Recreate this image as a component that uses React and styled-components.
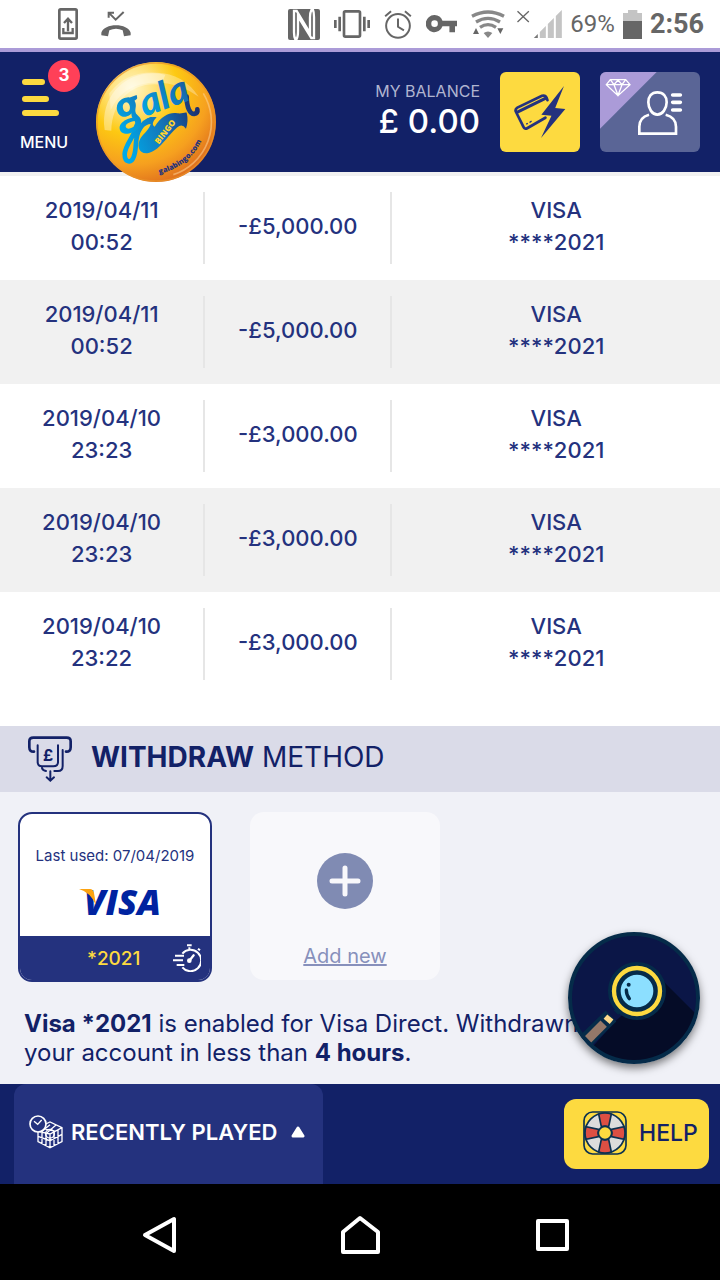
import styled, { createGlobalStyle } from "styled-components";

const withdrawals = [
    { date: "2019/04/11", time: "00:52", amount: "-£5,000.00", card: "****2021" },
    { date: "2019/04/11", time: "00:52", amount: "-£5,000.00", card: "****2021" },
    { date: "2019/04/10", time: "23:23", amount: "-£3,000.00", card: "****2021" },
    { date: "2019/04/10", time: "23:23", amount: "-£3,000.00", card: "****2021" },
    { date: "2019/04/10", time: "23:22", amount: "-£3,000.00", card: "****2021" },
];

function StatusBar() {
    return (
        <Status>
            <StatusLeft>
                <svg width="20" height="32" viewBox="174 24 60 96" fill="none" stroke="#666" strokeWidth="8">
                    <rect x="178" y="28" width="52" height="88" rx="4" />
                    <path d="M204 94V56M192 69l12-13 12 13M190 84v15h28V84" strokeWidth="7" />
                </svg>
                <svg width="30" height="26" viewBox="303 33 90 78">
                    <path d="M304 98C312 68 384 68 392 98V106L372 109L368 91Q348 82 328 91L324 109L304 106Z" fill="#666" />
                    <path d="M326 38L347 59L371 36M326 53V38H342" fill="none" stroke="#666" strokeWidth="6" />
                </svg>
            </StatusLeft>
            <StatusRight>
                <Nfc />
                <svg width="36" height="28" viewBox="0 0 108 84" fill="none" stroke="#666">
                    <rect x="30" y="4" width="48" height="76" rx="4" strokeWidth="8" />
                    <path d="M4 30V54M17 20V64M91 20V64M104 30V54" strokeWidth="8" />
                </svg>
                <svg width="28" height="29" viewBox="72 28 84 88" fill="none" stroke="#666" strokeWidth="6">
                    <circle cx="114" cy="76" r="36" />
                    <path d="M114 54V79L132 90M75 47L93 32M153 47L135 32" />
                </svg>
                <svg width="31" height="18" viewBox="199 46 94 54">
                    <path fillRule="evenodd" d="M225 46A26 26 0 0 1 249 63H293V80H287V98H270V80H249A26 26 0 1 1 225 46ZM225 62A10 10 0 1 0 225 82A10 10 0 1 0 225 62Z" fill="#666" />
                </svg>
                <svg width="34" height="28" viewBox="334 32 100 84">
                    <path d="M336 51Q384 25 432 51M348 68Q384 46 420 68M360 84Q384 68 408 84" fill="none" stroke="#888" strokeWidth="10" />
                    <path d="M371 101Q384 92 397 101L384 116Z" fill="#888" />
                    <path d="M348 86L357 104H339ZM412 87H430L421 104Z" fill="#666" />
                </svg>
            </StatusRight>
            <StatusClock>
                <svg width="45" height="28" viewBox="472 33 134 84">
                    <path d="M473 37L507 69M507 37L473 69" stroke="#666" strokeWidth="4" />
                    <path d="M522 117L534 105V117Z" fill="#777" />
                    <path d="M540 99L558 81V117H540ZM564 75L582 57V117H564ZM588 51L606 33V117H588Z" fill="#c4c4c4" />
                </svg>
                <span>69%</span>
                <svg width="19" height="29" viewBox="0 0 57 87">
                    <path d="M15 0H43V9H57V33H0V9H15Z" fill="#c4c4c4" />
                    <path d="M0 33H57V87H0Z" fill="#666" />
                </svg>
                <b>2:56</b>
            </StatusClock>
        </Status>
    );
}

function Nfc() {
    return (
        <svg width="32" height="31" viewBox="0 0 96 93">
            <path d="M6 0H90Q96 0 96 6V87Q96 93 90 93H6Q0 93 0 87V6Q0 0 6 0Z" fill="#666" />
            <path d="M23 93Q18 86 18 70V6H26L66 72V26Q66 8 72 0M74 0Q78 8 78 24V87H70L30 22V66Q30 86 24 93" fill="none" stroke="#fff" strokeWidth="7" />
        </svg>
    );
}

function GalaLogo() {
    return (
        <svg width="120" height="120" viewBox="18 36 360 360">
            <defs>
                <radialGradient id="ball" cx="0.3" cy="0.22" r="0.85">
                    <stop offset="0" stopColor="#fff6c8" />
                    <stop offset="0.22" stopColor="#ffe27a" />
                    <stop offset="0.45" stopColor="#fdc912" />
                    <stop offset="0.75" stopColor="#f6a01f" />
                    <stop offset="1" stopColor="#dd6b1d" />
                </radialGradient>
                <linearGradient id="ink" gradientUnits="userSpaceOnUse" x1="90" y1="240" x2="320" y2="150">
                    <stop offset="0" stopColor="#00a9e8" />
                    <stop offset="0.5" stopColor="#1474b8" />
                    <stop offset="1" stopColor="#1d2c6b" />
                </linearGradient>
                <path id="rim" d="M208 372Q296 350 334 274" />
            </defs>
            <circle cx="198" cy="216" r="180" fill="url(#ball)" />
            <path d="M44 240C28 130 120 50 226 74L214 104C130 92 66 150 64 242Z" fill="#fff" opacity="0.35" />
            <path d="M58 130Q110 62 200 68Q280 70 326 140Q240 80 150 104Q90 120 62 180Z" fill="#fff" opacity="0.3" />
            <path d="M340 130A166 166 0 0 1 250 374" fill="none" stroke="#ffd9a0" strokeWidth="5" opacity="0.5" />
            <circle cx="198" cy="216" r="177" fill="none" stroke="#e8942a" strokeWidth="4" opacity="0.7" />
            {/* ribbon under the name */}
            <path d="M156 236C158 208 178 198 200 202C186 216 186 226 194 230C216 196 240 186 262 190C276 192 284 186 290 188Q296 212 288 236Q276 220 262 232C232 258 206 306 172 310C144 312 140 284 152 264C162 250 178 238 182 222Q170 222 156 236Z" fill="url(#ink)" />
            <path d="M140 226C136 256 106 282 104 312C104 338 124 342 132 318C142 290 132 262 150 236C158 222 168 212 184 208" fill="none" stroke="url(#ink)" strokeWidth="14" strokeLinecap="round" />
            <path d="M290 140C290 172 300 192 312 192Q324 190 322 178" fill="none" stroke="url(#ink)" strokeWidth="14" strokeLinecap="round" />
            <text fill="url(#ink)" transform="translate(92 232) rotate(-20)">
                <LogoScript fontSize="150">g</LogoScript>
            </text>
            <text fill="url(#ink)" transform="translate(164 200) rotate(-20)">
                <LogoScript fontSize="116">ala</LogoScript>
            </text>
            <text fill="#ffd42e" transform="translate(206 284) rotate(-52)">
                <LogoSans fontSize="25">BINGO</LogoSans>
            </text>
            <text fill="#24327e">
                <textPath href="#rim"><LogoSans fontSize="22">galabingo.com</LogoSans></textPath>
            </text>
        </svg>
    );
}

function VisaLogo() {
    return (
        <svg width="96" height="48" viewBox="0 0 96 48">
            <VisaText x="17" y="38" fill="#0023a0">VISA</VisaText>
            <path d="M12 12H23Q26 12 27 16L29 28Q23 15 12 12Z" fill="#fca311" />
        </svg>
    );
}

function App() {
    return (
        <Page>
            <GlobalStyle />
            <StatusBar />
            <Header>
                <MenuButton>
                    <svg width="40" height="38" viewBox="0 0 40 38" stroke="#fdda40" strokeWidth="6" strokeLinecap="round">
                        <path d="M5 4H22M5 21H26M5 35H36" />
                    </svg>
                    MENU
                    <Badge>3</Badge>
                </MenuButton>
                <LogoLink href="#" aria-label="Gala Bingo"><GalaLogo /></LogoLink>
                <Balance>
                    <small>MY BALANCE</small>
                    <strong>£ 0.00</strong>
                </Balance>
                <DepositButton aria-label="Quick deposit">
                    <svg width="52" height="52" viewBox="463 258 154 154" fill="none" stroke="#24327e">
                        <path d="M556 352L502 383Q495 387 491 379L469 335Q465 327 473 322L546 287Q556 284 560 294L562 300" strokeWidth="8" strokeLinecap="round" />
                        <path d="M470 337L562 292" strokeWidth="9" />
                        <path d="M499 371L504 369M509 366L515 362" strokeWidth="4" />
                        <path d="M611 258L544 343L574 346L543 412L615 326L585 323Z" fill="#24327e" stroke="none" />
                    </svg>
                </DepositButton>
                <AccountButton aria-label="My account">
                    <svg width="100" height="80" viewBox="720 216 300 240" fill="none" stroke="#fff">
                        <path d="M720 216H890L720 386Z" fill="#ab9bd8" stroke="none" />
                        <path d="M751 239H797L810 254L774 287L739 254ZM739 254H810M751 239L762 254L774 240L786 254L797 239M762 254L774 286L786 254" strokeWidth="4" />
                        <path d="M892 277C874 277 865 290 865 307C865 326 877 344 892 344C907 344 920 326 920 307C920 290 910 277 892 277ZM867 344Q838 352 838 380V401H948V380Q948 352 917 344" strokeWidth="8" />
                        <path d="M938 285H961M938 307H961M938 330H961" strokeWidth="11" strokeLinecap="round" />
                    </svg>
                </AccountButton>
            </Header>

            <Table>
                <tbody>
                    {withdrawals.map((item, index) => (
                        <Row key={index}>
                            <DateCell><Cell $line>{item.date}<br />{item.time}</Cell></DateCell>
                            <AmountCell><Cell $line>{item.amount}</Cell></AmountCell>
                            <td><Cell>VISA<br />{item.card}</Cell></td>
                        </Row>
                    ))}
                </tbody>
            </Table>

            <TitleBar>
                <svg width="44" height="46" viewBox="84 50 132 138" fill="none" stroke="#122167" strokeLinecap="round">
                    <path d="M102 97Q88 98 88 84V66Q88 55 100 55H200Q212 55 212 66V84Q212 98 198 97" strokeWidth="8" />
                    <path d="M113 78V128Q113 141 126 141H160Q174 141 174 128V78M188 92V140Q188 155 174 155H163M138 155Q128 154 126 146" strokeWidth="6" />
                    <path d="M151 156V183M140 174L151 184L162 174" strokeWidth="6" />
                    <PoundText x="129" y="126" fill="#122167" stroke="none">£</PoundText>
                </svg>
                <h2><b>WITHDRAW</b> METHOD</h2>
            </TitleBar>

            <Methods>
                <Cards>
                    <PaymentCard>
                        <CardTop>
                            <span>Last used: 07/04/2019</span>
                            <VisaLogo />
                        </CardTop>
                        <CardFooter>
                            *2021
                            <svg width="28" height="28" viewBox="519 432 84 84" fill="none" stroke="#fff" strokeWidth="6">
                                <path d="M547 461A32 32 0 1 1 547 502M568 442V450" />
                                <path d="M561 436H575M525 467H552M519 481H549M530 495H553M594 446L600 451" />
                                <path d="M568 482L581 466" strokeWidth="7" strokeLinecap="round" />
                                <circle cx="568" cy="482" r="4" fill="#fff" />
                            </svg>
                        </CardFooter>
                    </PaymentCard>
                    <AddCard href="#">
                        <svg width="58" height="58" viewBox="0 0 58 58">
                            <circle cx="29" cy="29" r="28" fill="#808bb3" />
                            <path d="M29 16V42M16 29H42" stroke="#f8f8fb" strokeWidth="5" strokeLinecap="round" />
                        </svg>
                        <span>Add new</span>
                    </AddCard>
                </Cards>
                <Note><b>Visa *2021</b> is enabled for Visa Direct. Withdrawn<br />your account in less than <b>4 hours</b>.</Note>
                <SearchButton aria-label="Search">
                    <svg width="132" height="132" viewBox="84 36 396 396">
                        <clipPath id="disc"><circle cx="282" cy="234" r="192" /></clipPath>
                        <circle cx="282" cy="234" r="192" fill="#0b1647" />
                        <g clipPath="url(#disc)">
                            <path d="M366 180L500 314V450H100L160 378L230 300Z" fill="#050c27" />
                            <path d="M246 260L228 278" stroke="#052b49" strokeWidth="18" />
                            <path d="M213 288L120 378" stroke="#052b49" strokeWidth="46" />
                            <path d="M191 311L144 358" stroke="#947869" strokeWidth="27" />
                            <path d="M211 291L200 304" stroke="#fddb8b" strokeWidth="24" />
                            <circle cx="291" cy="213" r="68" fill="#8cdfff" stroke="#052b49" strokeWidth="38" />
                            <circle cx="291" cy="213" r="69" fill="none" stroke="#fdda40" strokeWidth="13" />
                            <circle cx="266" cy="194" r="6" fill="#052b49" />
                            <path d="M259 210Q259 225 268 236" fill="none" stroke="#052b49" strokeWidth="10" strokeLinecap="round" />
                        </g>
                        <circle cx="282" cy="234" r="192" fill="none" stroke="#052b49" strokeWidth="12" />
                    </svg>
                </SearchButton>
            </Methods>

            <Footer>
                <RecentTab>
                    <svg width="34" height="34" viewBox="86 111 102 102" fill="none" stroke="#fff" strokeWidth="4">
                        <path d="M136 138L149 132L185 149V191L149 209L113 191V160M113 160L149 168L185 149M149 168V209M125 164V198M137 167V204M161 161V204M173 155V198M113 175L149 188L185 169M130 152L166 160M149 140L125 160M167 141L140 164" />
                        <circle cx="149" cy="167" r="13" />
                        <circle cx="113" cy="138" r="24" fill="#24327e" strokeWidth="5" />
                        <path d="M101 130L112 139L124 126" />
                    </svg>
                    <span>RECENTLY PLAYED</span>
                    <svg width="14" height="12" viewBox="0 0 14 12">
                        <path d="M7 2L12 10H2Z" fill="#fff" stroke="#fff" strokeWidth="3" strokeLinejoin="round" />
                    </svg>
                </RecentTab>
                <HelpButton>
                    <svg width="44" height="44" viewBox="129 96 132 132" fill="none" stroke="#0b3150" strokeWidth="5">
                        <rect x="132" y="99" width="126" height="126" rx="26" />
                        <circle cx="195" cy="162" r="60" fill="#dcdcdc" />
                        <path d="M176 105Q195 99 214 105L206 143Q195 139 184 143ZM176 219Q195 225 214 219L206 181Q195 185 184 181ZM138 143Q132 162 138 181L176 173Q172 162 176 151ZM252 143Q258 162 252 181L214 173Q218 162 214 151Z" fill="#dd4f43" />
                        <circle cx="195" cy="162" r="20" fill="#fdda40" />
                    </svg>
                    HELP
                </HelpButton>
            </Footer>

            <Nav>
                <button aria-label="Back">
                    <svg width="48" height="40" viewBox="0 0 48 40"><path d="M34 4V36L5 20Z" /></svg>
                </button>
                <button aria-label="Home">
                    <svg width="40" height="40" viewBox="0 0 40 40"><path d="M3 17L20 3L38 17V37H3Z" /></svg>
                </button>
                <button aria-label="Recent apps">
                    <svg width="40" height="40" viewBox="0 0 40 40"><path d="M6 6H35V34H6Z" /></svg>
                </button>
            </Nav>
        </Page>
    );
}

const GlobalStyle = createGlobalStyle`
* {
    box-sizing: border-box;
}
body {
    margin: 0;
    background-color: #ffffff;
    font-family: "Inter", "Liberation Sans", sans-serif;
    color: #122167;
}
button {
    font-family: inherit;
    border: none;
    padding: 0;
    cursor: pointer;
}
svg {
    display: block;
    flex-shrink: 0;
}
`

const Page = styled.main`
width: 100%;
min-height: 100vh;
display: flex;
flex-direction: column;
`

const Status = styled.div`
height: 48px;
padding: 0 16px 0 58px;
display: flex;
align-items: center;
color: #666666;
font-family: "Roboto", "Liberation Sans", sans-serif;
`

const StatusLeft = styled.div`
display: flex;
align-items: center;
gap: 23px;
margin-right: auto;
`

const StatusRight = styled.div`
display: flex;
align-items: center;
gap: 14px;
margin-right: 12px;
`

const StatusClock = styled.div`
display: flex;
align-items: center;
gap: 8px;

    span{
        font-size: 24px;
    }
    b{
        font-size: 27px;
        font-weight: 700;
    }
`

const Header = styled.header`
position: relative;
height: 128px;
padding: 0 20px;
border-top: 4px solid #ab9bd8;
border-bottom: 4px solid #f1f1f1;
background-color: #122167;
display: flex;
align-items: center;
gap: 20px;
`

const MenuButton = styled.button`
position: relative;
width: 56px;
height: 80px;
padding-top: 6px;
background: none;
color: #ffffff;
font-size: 16px;
font-weight: 500;
text-align: left;
display: flex;
flex-direction: column;
gap: 16px;
`

const Badge = styled.span`
position: absolute;
top: -12px;
left: 28px;
width: 32px;
height: 32px;
padding-bottom: 2px;
border-radius: 50%;
background-color: #ff4058;
font-size: 17px;
font-weight: 700;
display: flex;
align-items: center;
justify-content: center;
`

const LogoLink = styled.a`
align-self: flex-start;
margin-top: 10px;
`

const LogoScript = styled.tspan`
font-family: "Lato", sans-serif;
font-weight: 900;
font-style: italic;
`

const LogoSans = styled.tspan`
font-family: "Open Sans", sans-serif;
font-weight: 800;
`

const VisaText = styled.text`
font-family: "Open Sans", sans-serif;
font-size: 35px;
font-weight: 800;
font-style: italic;
`

const Balance = styled.div`
margin-left: auto;
padding-bottom: 2px;
text-align: right;

    small{
        display: block;
        font-size: 16px;
        line-height: 20px;
        color: #b0b5d0;
    }
    strong{
        display: block;
        font-size: 33px;
        line-height: 40px;
        font-weight: 500;
        color: #ffffff;
    }
`

const DepositButton = styled.button`
width: 80px;
height: 80px;
border-radius: 6px;
background-color: #fdda40;
display: flex;
align-items: center;
justify-content: center;
`

const AccountButton = styled.button`
width: 100px;
height: 80px;
border-radius: 6px;
overflow: hidden;
background-color: #5a6596;
`

const Table = styled.table`
width: 100%;
margin-bottom: 30px;
border-collapse: collapse;
table-layout: fixed;

    td{
        padding: 16px 0;
    }
`

const Row = styled.tr`
    &:nth-child(even){
        background-color: #f1f1f1;
    }
`

const DateCell = styled.td`
width: 28.5%;
`

const AmountCell = styled.td`
width: 26%;
`

const Cell = styled.div`
height: 72px;
padding-bottom: 4px;
border-right: ${props => props.$line ? "2px solid #e6e6e6" : "none"};
display: flex;
align-items: center;
justify-content: center;
text-align: center;
font-size: 22px;
line-height: 32px;
font-weight: 500;
color: #24327e;
`

const TitleBar = styled.div`
height: 66px;
padding: 0 28px;
background-color: #dadbe8;
display: flex;
align-items: center;
gap: 19px;

    h2{
        margin: 0;
        padding-bottom: 4px;
        font-size: 28px;
        font-weight: 400;
    }
    b{
        font-weight: 700;
    }
`

const PoundText = styled.text`
font-size: 48px;
font-weight: 700;
`

const Methods = styled.section`
position: relative;
padding: 20px 18px 16px;
background-color: #f0f1f7;
flex-grow: 1;
`

const Cards = styled.div`
display: flex;
align-items: flex-start;
gap: 38px;
`

const PaymentCard = styled.button`
width: 194px;
height: 170px;
border: 2px solid #24327e;
border-radius: 14px;
overflow: hidden;
background-color: #ffffff;
display: flex;
flex-direction: column;
`

const CardTop = styled.span`
width: 100%;
height: 122px;
padding-top: 32px;
font-size: 15px;
line-height: 20px;
color: #24327e;
display: flex;
flex-direction: column;
align-items: center;
gap: 11px;
`

const CardFooter = styled.span`
width: 100%;
flex-grow: 1;
padding: 0 9px 0 67px;
background-color: #24327e;
color: #fdda40;
font-size: 19px;
font-weight: 500;
display: flex;
align-items: center;
justify-content: space-between;
`

const AddCard = styled.a`
width: 190px;
height: 168px;
padding-top: 40px;
border-radius: 14px;
background-color: #f8f8fb;
color: #8790bb;
font-size: 20px;
display: flex;
flex-direction: column;
align-items: center;
gap: 34px;
`

const Note = styled.p`
margin: 27px 0 0 6px;
font-size: 24px;
line-height: 29px;
white-space: nowrap;
`

const SearchButton = styled.button`
position: absolute;
right: 20px;
bottom: 20px;
border-radius: 50%;
background: none;
box-shadow: 0 4px 8px rgba(0, 0, 0, 0.5);
`

const Footer = styled.footer`
height: 100px;
padding: 0 11px 0 14px;
background-color: #122167;
display: flex;
align-items: center;
justify-content: space-between;
`

const RecentTab = styled.button`
align-self: stretch;
padding: 0 18px 4px 15px;
border-radius: 12px 12px 0 0;
background-color: #24327e;
color: #ffffff;
font-size: 22px;
font-weight: 600;
display: flex;
align-items: center;

    span{
        margin: 0 14px 0 8px;
    }
`

const HelpButton = styled.button`
width: 145px;
height: 70px;
padding: 0 0 2px 8px;
border-radius: 12px;
background-color: #fdda40;
color: #122167;
font-size: 23px;
font-weight: 500;
display: flex;
align-items: center;
justify-content: center;
gap: 12px;
`

const Nav = styled.nav`
height: 96px;
padding: 6px 148px 0 140px;
background-color: #000000;
display: flex;
align-items: center;
justify-content: space-between;

    button{
        background: none;
    }
    svg{
        fill: none;
        stroke: #ffffff;
        stroke-width: 4;
        stroke-linejoin: round;
    }
`

export default App;
